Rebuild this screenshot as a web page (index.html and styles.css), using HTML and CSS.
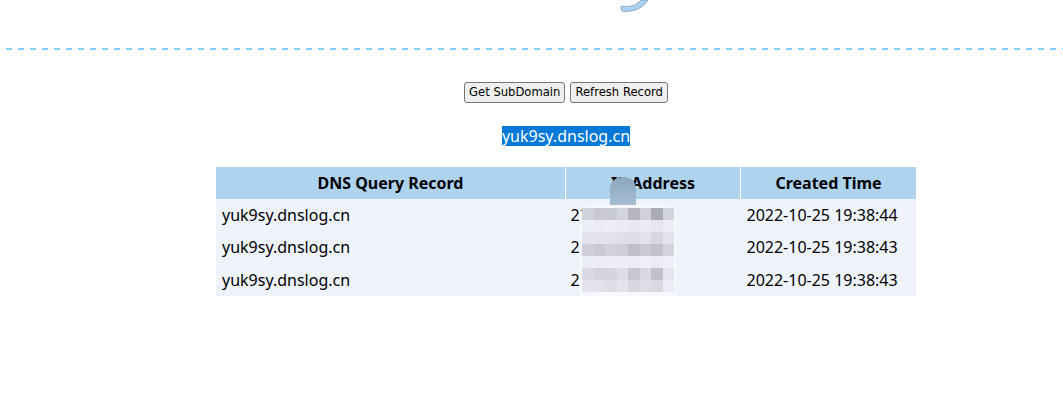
FILE: index.html
```html
<!DOCTYPE html>
<html>
<head>
<meta charset="utf-8">
<title>DNSLog</title>
<link rel="stylesheet" href="styles.css">
</head>
<body>
<div class="top">
  <svg class="logo" width="30" height="14" viewBox="0 0 30 14">
    <path d="M1.5 6 C 9 7.5, 16 6, 21 0 L 28 0 C 23 8, 14 12, 3.5 11.5 C 1 11.2, 0.3 7.5, 1.5 6 Z" fill="#a9d1f3" stroke="#7b90a3" stroke-width="0.7"/>
  </svg>
</div>
<div class="divider"></div>
<main class="main">
  <div class="actions">
    <button class="btn">Get SubDomain</button>
    <button class="btn">Refresh Record</button>
  </div>
  <div class="domain"><span class="selected">yuk9sy.dnslog.cn</span></div>
  <div class="table-wrap">
    <table class="records">
      <thead>
        <tr><th class="c1">DNS Query Record</th><th class="c2">IP Address</th><th class="c3">Created Time</th></tr>
      </thead>
      <tbody>
        <tr><td>yuk9sy.dnslog.cn</td><td>22</td><td>2022-10-25 19:38:44</td></tr>
        <tr><td>yuk9sy.dnslog.cn</td><td>22</td><td>2022-10-25 19:38:43</td></tr>
        <tr><td>yuk9sy.dnslog.cn</td><td>2.</td><td>2022-10-25 19:38:43</td></tr>
      </tbody>
    </table>
    <div class="mosaic">
      <div class="cap"></div>
      <div class="blur">
        <div class="grid">
          <i style="background:#d0d2dc"></i><i style="background:#c8c9d3"></i><i style="background:#c8cad4"></i><i style="background:#d3d5de"></i><i style="background:#b8b6c0"></i><i style="background:#d0d1da"></i><i style="background:#a9abb6"></i><i style="background:#d2d4de"></i>
          <i style="background:#eceef5"></i><i style="background:#eaebf3"></i><i style="background:#eeeff6"></i><i style="background:#ebecf3"></i><i style="background:#e7e8f0"></i><i style="background:#eaebf3"></i><i style="background:#e5e6ee"></i><i style="background:#ecedf4"></i>
          <i style="background:#e3e4ec"></i><i style="background:#e1e2ea"></i><i style="background:#e2e3eb"></i><i style="background:#dddee7"></i><i style="background:#dcdde6"></i><i style="background:#e1e2ea"></i><i style="background:#d5d6df"></i><i style="background:#e2e3eb"></i>
          <i style="background:#cfd0da"></i><i style="background:#c9cad4"></i><i style="background:#d0d1db"></i><i style="background:#cdced8"></i><i style="background:#bebfc9"></i><i style="background:#cacbd5"></i><i style="background:#c1c2cc"></i><i style="background:#d2d3dd"></i>
          <i style="background:#eceef5"></i><i style="background:#ecedf4"></i><i style="background:#eeeff6"></i><i style="background:#eeeff6"></i><i style="background:#ecedf4"></i><i style="background:#eff0f7"></i><i style="background:#eaebf3"></i><i style="background:#eff0f7"></i>
          <i style="background:#d9dae3"></i><i style="background:#d3d4de"></i><i style="background:#d4d5df"></i><i style="background:#dcdde6"></i><i style="background:#c6c7d1"></i><i style="background:#d7d8e1"></i><i style="background:#bfc0ca"></i><i style="background:#e4e5ed"></i>
          <i style="background:#e3e4ec"></i><i style="background:#e1e2ea"></i><i style="background:#dcdde6"></i><i style="background:#e2e3eb"></i><i style="background:#d6d7e0"></i><i style="background:#dddee7"></i><i style="background:#d8d9e2"></i><i style="background:#ecedf4"></i>
        </div>
      </div>
    </div>
  </div>
</main>
</body>
</html>
```

FILE: styles.css
```css
html, body {
  margin: 0;
  padding: 0;
  background: #ffffff;
  overflow: hidden;
}

body {
  font-family: "Noto Sans", "Open Sans", sans-serif;
  color: #000;
}

.top {
  height: 48px;
  display: flex;
  justify-content: flex-start;
  padding-left: 620px;
  box-sizing: border-box;
}

.logo {
  display: block;
}

.divider {
  height: 2px;
  background: repeating-linear-gradient(to right, transparent 0 6px, #87cefa 6px 12px);
}

.main {
  padding-left: 69px;
  padding-top: 32px;
  display: flex;
  flex-direction: column;
  align-items: center;
}

.actions {
  display: flex;
  gap: 5px;
}

.btn {
  font-family: "DejaVu Sans", sans-serif;
  font-size: 11.6px;
  height: 21px;
  padding: 0 4px;
  background: #efefef;
  border: 1px solid #767676;
  border-radius: 3px;
  color: #000;
  line-height: 19px;
}

.domain {
  margin-top: 23px;
  font-size: 16px;
  line-height: 20px;
}

.selected {
  background: #0078d7;
  color: #fff;
  display: inline-block;
  line-height: 20px;
}

.table-wrap {
  position: relative;
  margin-top: 21px;
}

.records {
  width: 700px;
  border-collapse: collapse;
  font-size: 16px;
}

.records th {
  background: #add3ef;
  height: 32px;
  padding: 0;
  font-weight: bold;
  text-align: center;
  border-left: 1px solid #fff;
}

.records th:first-child {
  border-left: none;
}

.records .c1 { width: 349px; }
.records .c2 { width: 174px; }
.records .c3 { width: 175px; }

.records td {
  background: #eef3fe;
  height: 32px;
  padding: 0 0 0 6px;
  text-align: left;
}

.records tbody tr:last-child td {
  height: 33px;
}

.records td:nth-child(2) {
  padding-left: 5px;
}

.mosaic {
  position: absolute;
  left: 364px;
  top: 10px;
  width: 96px;
  height: 126px;
}

.cap {
  position: absolute;
  left: 30px;
  top: 0;
  width: 26px;
  height: 30px;
  border-radius: 12px 12px 0 0;
  background: linear-gradient(#8ca6bc, #a7bfd3);
}

.blur {
  position: absolute;
  left: 0;
  top: 28px;
  width: 96px;
  height: 104px;
  border-radius: 12px;
  background: #f7f8fc;
}

.grid {
  position: absolute;
  left: 2px;
  top: 3px;
  display: grid;
  grid-template-columns: repeat(8, 11.5px);
  grid-auto-rows: 12px;
}

.grid i {
  display: block;
}
```
